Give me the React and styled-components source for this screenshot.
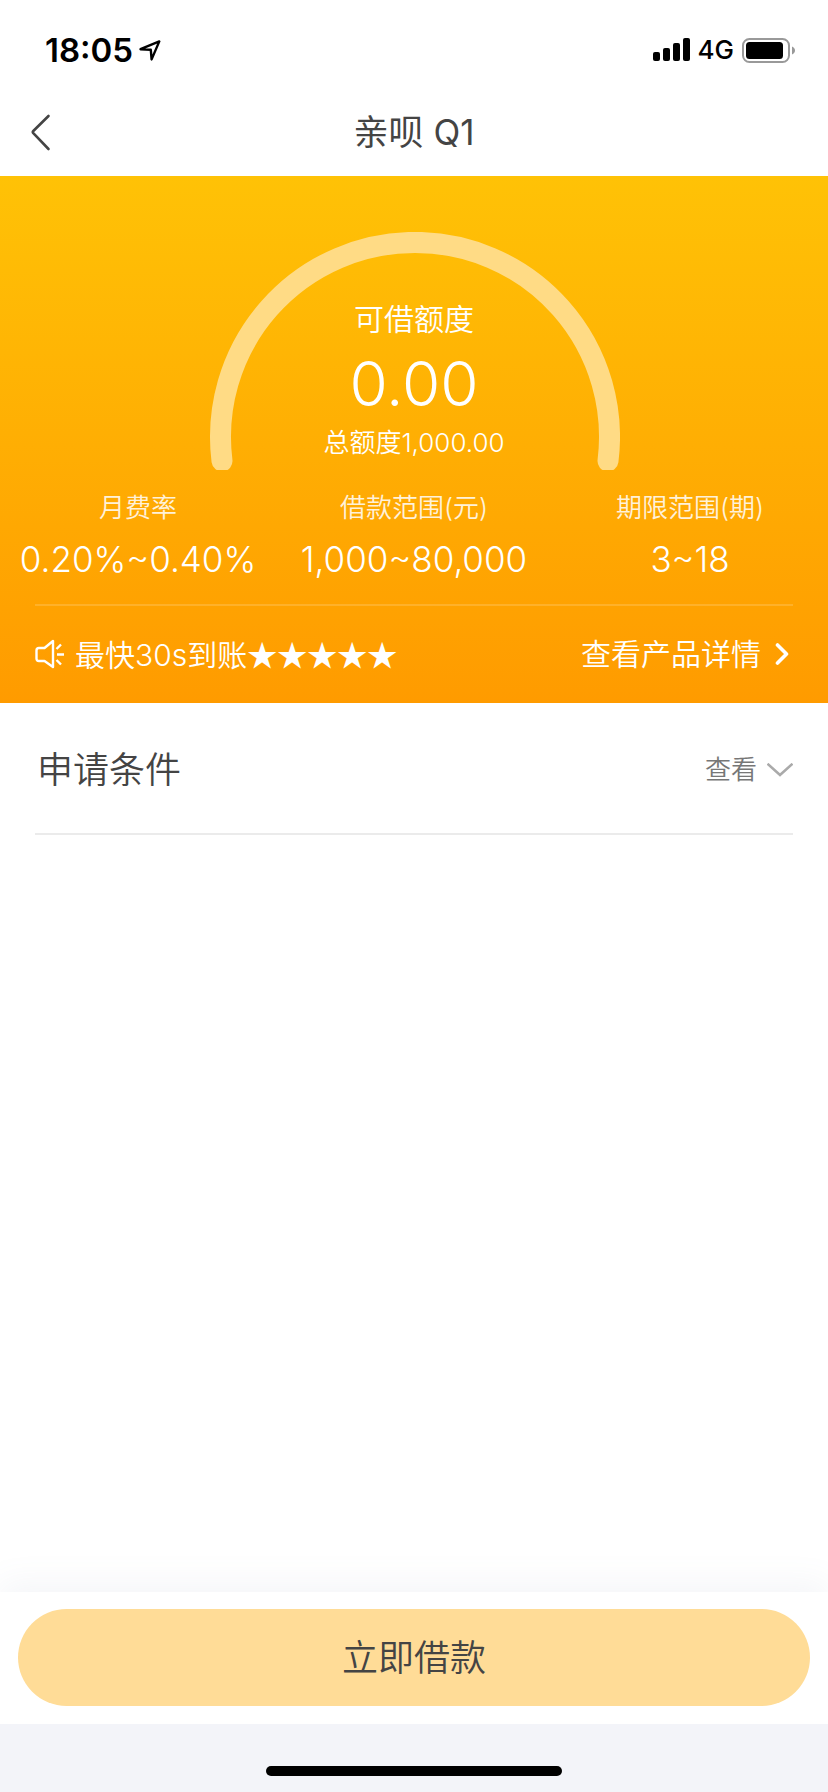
import React, { useState } from "react";
import styled, { createGlobalStyle } from "styled-components";

const GlobalStyle = createGlobalStyle`
  * { box-sizing: border-box; }
  body {
    margin: 0;
    background: #fff;
    color: #444;
    font-family: Inter, "Noto Sans CJK SC", sans-serif;
  }
  button { font-family: inherit; border: 0; padding: 0; background: none; cursor: pointer; }
  svg { display: block; flex: none; }
`;

const Page = styled.div`
  min-height: 100vh;
  display: flex;
  flex-direction: column;
`;

const StatusBar = styled.div`
  height: 88px;
  padding: 12px 33px 0 45px;
  display: flex;
  align-items: center;
  justify-content: space-between;
  color: #000;
`;

const StatusGroup = styled.div`
  display: flex;
  align-items: center;
  gap: ${(p) => p.$gap}px;
`;

const Time = styled.span`
  font-size: 33px;
  line-height: 40px;
  font-weight: 600;
`;

const Network = styled.span`
  font-size: 26px;
  line-height: 36px;
  font-weight: 500;
`;

const NavBar = styled.header`
  height: 88px;
  padding: 0 30px;
  display: grid;
  grid-template-columns: 1fr auto 1fr;
  align-items: center;
`;

const BackButton = styled.button`
  justify-self: start;
  color: #444;
`;

const Title = styled.h1`
  margin: 0;
  font-size: 35px;
  line-height: 48px;
  font-weight: 400;
`;

const Hero = styled.section`
  padding-top: 56px;
  background: linear-gradient(#ffc206, #ff9b00);
  color: #fff;
`;

const Gauge = styled.div`
  display: grid;
  justify-content: center;
  margin-bottom: 20px;

  > * { grid-area: 1 / 1; }
`;

const GaugeText = styled.div`
  padding-top: 66px;
  display: flex;
  flex-direction: column;
  align-items: center;
  font-weight: 350;
`;

const GaugeCaption = styled.span`
  font-size: 30px;
  line-height: 42px;
`;

const Amount = styled.strong`
  margin-top: 8px;
  font-size: 62px;
  line-height: 72px;
  font-weight: 350;
`;

const Total = styled.span`
  margin-top: 5px;
  font-size: 26px;
  line-height: 36px;
`;

const Stats = styled.dl`
  margin: 0 0 20px;
  display: grid;
  grid-template-columns: repeat(3, minmax(0, 1fr));
  text-align: center;
  font-weight: 350;
`;

const StatLabel = styled.dt`
  font-size: 26px;
  line-height: 36px;
  opacity: 0.85;
`;

const StatValue = styled.dd`
  margin: 8px 0 0;
  font-size: 35px;
  line-height: 50px;
  white-space: nowrap;
`;

const Notice = styled.div`
  height: 99px;
  margin: 0 35px;
  padding: 0 4px 2px 0;
  border-top: 2px solid rgba(255, 255, 255, 0.16);
  display: flex;
  align-items: center;
  justify-content: space-between;
  font-size: 30px;
  line-height: 42px;
  font-weight: 350;
`;

const NoticeText = styled.div`
  display: flex;
  align-items: center;
  gap: 10px;
`;

const Stars = styled.span`
  font-family: "Noto Sans CJK SC", sans-serif;
`;

const DetailLink = styled.a`
  display: flex;
  align-items: center;
  gap: 14px;
  color: inherit;
  text-decoration: none;
`;

const Conditions = styled.section`
  height: 132px;
  margin: 0 35px;
  padding: 4px 0 0 2px;
  border-bottom: 2px solid #ebebeb;
  display: flex;
  align-items: center;
  justify-content: space-between;
`;

const SectionTitle = styled.h2`
  margin: 0;
  font-size: 36px;
  line-height: 48px;
  font-weight: 350;
`;

const ToggleButton = styled.button`
  display: flex;
  align-items: center;
  gap: 10px;
  font-size: 26px;
  line-height: 36px;
  font-weight: 350;
  color: #777;
`;

const Footer = styled.footer`
  margin-top: auto;
`;

const ActionBar = styled.div`
  padding: 17px 18px 18px;
  background: #fff;
  box-shadow: 0 -8px 32px rgba(120, 130, 170, 0.08);
`;

const ApplyButton = styled.button`
  display: block;
  width: 100%;
  height: 97px;
  border-radius: 49px;
  background: #ffdc97;
  color: #444;
  font-size: 36px;
  line-height: 48px;
  font-weight: 350;
`;

const SafeArea = styled.div`
  position: relative;
  height: 68px;
  padding-top: 42px;
  background: #f3f4f9;
`;

const HomeIndicator = styled.div`
  width: 296px;
  height: 10px;
  margin: 0 auto;
  border-radius: 5px;
  background: #000;
`;

const stats = [
  { label: "月费率", value: "0.20%~0.40%" },
  { label: "借款范围(元)", value: "1,000~80,000" },
  { label: "期限范围(期)", value: "3~18" },
];

const LocationIcon = () => (
  <svg width="22" height="21" viewBox="0 0 22 21" fill="none" stroke="#000" strokeWidth="2.4" strokeLinejoin="round">
    <path d="M1.5 9.2 20.3 1.4 12.6 19.4 11.8 9.8Z" />
  </svg>
);

const SignalIcon = () => (
  <svg width="37" height="24" viewBox="0 0 37 24">
    <rect x="0" y="14" width="7" height="9" rx="2" />
    <rect x="10" y="10" width="7" height="13" rx="2" />
    <rect x="20" y="5" width="7" height="18" rx="2" />
    <rect x="30" y="0" width="7" height="23" rx="2" />
  </svg>
);

const BatteryIcon = () => (
  <svg width="53" height="25" viewBox="0 0 53 25">
    <rect x="1" y="1" width="46" height="23" rx="6.5" fill="none" stroke="#999" strokeWidth="2" />
    <rect x="4" y="4" width="37" height="17" rx="3.5" />
    <path d="M50 8.5c4 1.5 4 6.5 0 8z" fill="#999" />
  </svg>
);

const BackIcon = () => (
  <svg width="21" height="38" viewBox="0 0 21 38" fill="none" stroke="currentColor" strokeWidth="2.6" strokeLinecap="round" strokeLinejoin="round">
    <path d="M18.5 3 3.3 18Q2.3 19 3.3 20.2L18.5 36" />
  </svg>
);

const GaugeArc = () => (
  <svg width="412" height="238" viewBox="0 0 412 238" fill="none" stroke="#ffdb85" strokeWidth="21" strokeLinecap="round">
    <path d="M14 229A194.5 194.5 0 1 1 400 229" />
  </svg>
);

const SpeakerIcon = () => (
  <svg width="30" height="30" viewBox="0 0 30 30" fill="none" stroke="#fff" strokeWidth="2.4" strokeLinejoin="round">
    <path d="M18 2V28L9.5 22H4Q1.5 22 1.5 19.5V11.5Q1.5 9 4 9H9.5Z" />
    <path d="M21.5 10 26 5.5M22 15.5H29M21.5 21 26 25.5" />
  </svg>
);

const RightIcon = () => (
  <svg width="14" height="24" viewBox="0 0 14 24" fill="none" stroke="#fff" strokeWidth="3.6" strokeLinecap="round" strokeLinejoin="round">
    <path d="M2.5 3 11.5 12 2.5 21" />
  </svg>
);

const DownIcon = () => (
  <svg width="26" height="14" viewBox="0 0 26 14" fill="none" stroke="#aaa" strokeWidth="2.6">
    <path d="M0.5 0.8 13 12 25.5 0.8" />
  </svg>
);

export default function App() {
  const [open, setOpen] = useState(false);
  return (
    <>
      <GlobalStyle />
      <Page>
        <StatusBar>
          <StatusGroup $gap={6}>
            <Time>18:05</Time>
            <LocationIcon />
          </StatusGroup>
          <StatusGroup $gap={8}>
            <SignalIcon />
            <Network>4G</Network>
            <BatteryIcon />
          </StatusGroup>
        </StatusBar>
        <NavBar>
          <BackButton aria-label="返回"><BackIcon /></BackButton>
          <Title>亲呗 Q1</Title>
        </NavBar>
        <Hero>
          <Gauge>
            <GaugeArc />
            <GaugeText>
              <GaugeCaption>可借额度</GaugeCaption>
              <Amount>0.00</Amount>
              <Total>总额度1,000.00</Total>
            </GaugeText>
          </Gauge>
          <Stats>
            {stats.map((s) => (
              <div key={s.label}>
                <StatLabel>{s.label}</StatLabel>
                <StatValue>{s.value}</StatValue>
              </div>
            ))}
          </Stats>
          <Notice>
            <NoticeText>
              <SpeakerIcon />
              <span>最快30s到账<Stars>★★★★★</Stars></span>
            </NoticeText>
            <DetailLink href="#detail">
              查看产品详情
              <RightIcon />
            </DetailLink>
          </Notice>
        </Hero>
        <Conditions>
          <SectionTitle>申请条件</SectionTitle>
          <ToggleButton aria-expanded={open} onClick={() => setOpen(!open)}>
            查看
            <DownIcon />
          </ToggleButton>
        </Conditions>
        <Footer>
          <ActionBar>
            <ApplyButton>立即借款</ApplyButton>
          </ActionBar>
          <SafeArea>
            <HomeIndicator />
          </SafeArea>
        </Footer>
      </Page>
    </>
  );
}
